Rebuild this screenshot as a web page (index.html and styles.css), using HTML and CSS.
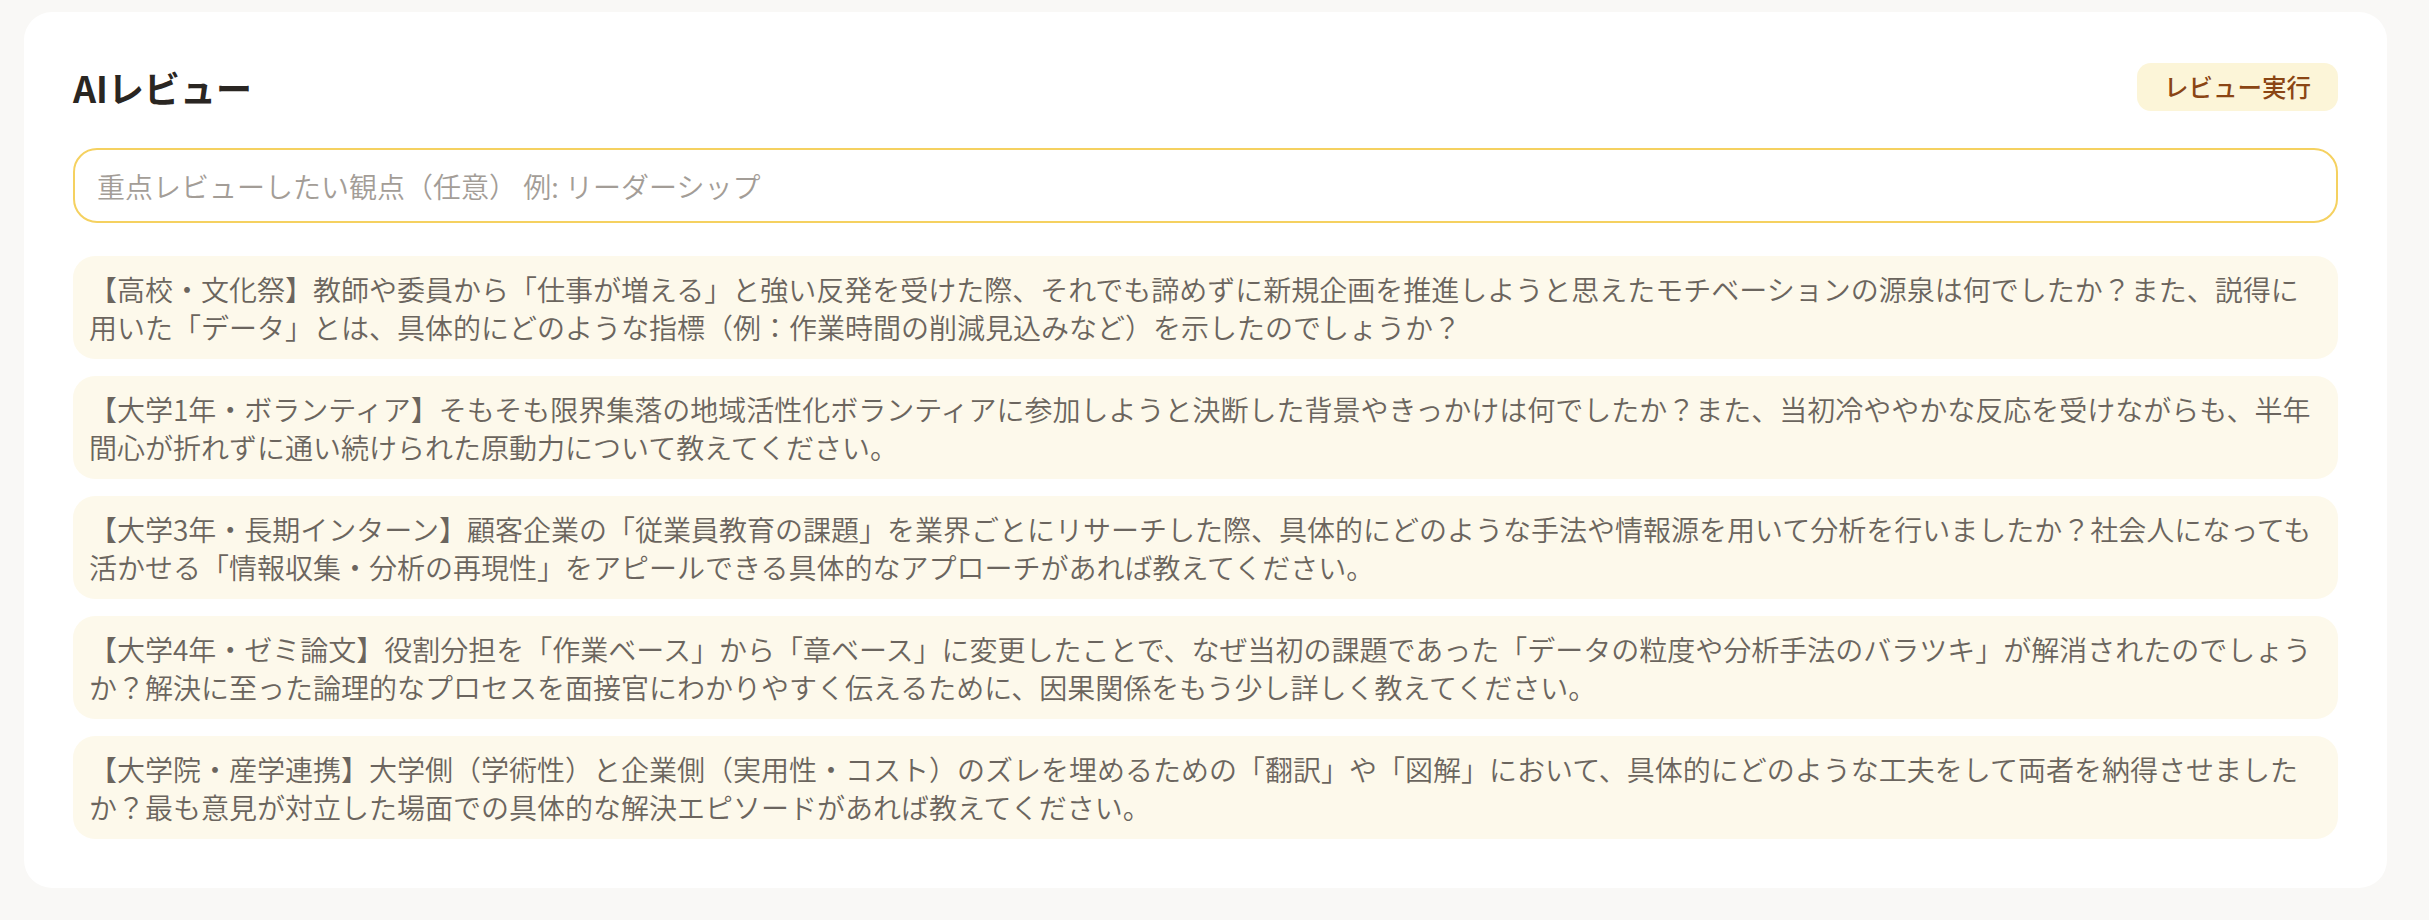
FILE: index.html
```html
<!DOCTYPE html>
<html lang="ja">
<head>
<meta charset="utf-8">
<title>AIレビュー</title>
<link rel="stylesheet" href="styles.css">
</head>
<body>
<section class="card">
  <div class="card-header">
    <h2 class="title">AIレビュー</h2>
    <button class="run-btn" type="button">レビュー実行</button>
  </div>
  <input class="focus-input" type="text" placeholder="重点レビューしたい観点（任意） 例: リーダーシップ">
  <ul class="question-list">
    <li class="question">【高校・文化祭】教師や委員から「仕事が増える」と強い反発を受けた際、それでも諦めずに新規企画を推進しようと思えたモチベーションの源泉は何でしたか？また、説得に用いた「データ」とは、具体的にどのような指標（例：作業時間の削減見込みなど）を示したのでしょうか？</li>
    <li class="question">【大学1年・ボランティア】そもそも限界集落の地域活性化ボランティアに参加しようと決断した背景やきっかけは何でしたか？また、当初冷ややかな反応を受けながらも、半年間心が折れずに通い続けられた原動力について教えてください。</li>
    <li class="question">【大学3年・長期インターン】顧客企業の「従業員教育の課題」を業界ごとにリサーチした際、具体的にどのような手法や情報源を用いて分析を行いましたか？社会人になっても活かせる「情報収集・分析の再現性」をアピールできる具体的なアプローチがあれば教えてください。</li>
    <li class="question">【大学4年・ゼミ論文】役割分担を「作業ベース」から「章ベース」に変更したことで、なぜ当初の課題であった「データの粒度や分析手法のバラツキ」が解消されたのでしょうか？解決に至った論理的なプロセスを面接官にわかりやすく伝えるために、因果関係をもう少し詳しく教えてください。</li>
    <li class="question">【大学院・産学連携】大学側（学術性）と企業側（実用性・コスト）のズレを埋めるための「翻訳」や「図解」において、具体的にどのような工夫をして両者を納得させましたか？最も意見が対立した場面での具体的な解決エピソードがあれば教えてください。</li>
  </ul>
</section>
</body>
</html>
```

FILE: styles.css
```css
* {
  box-sizing: border-box;
}

html, body {
  margin: 0;
  background: #f9f8f6;
}

body {
  padding: 12px 24px;
  font-family: "Noto Sans CJK JP", "Noto Sans", sans-serif;
  text-spacing-trim: space-all;
}

.card {
  width: 2363px;
  background: #ffffff;
  border-radius: 28px;
  padding: 49px;
}

.card-header {
  display: flex;
  align-items: center;
  justify-content: space-between;
  height: 52px;
}

.title {
  margin: 0;
  font-size: 36px;
  line-height: 52px;
  font-weight: 700;
  color: #2a2622;
}

.run-btn {
  font-family: "Noto Sans CJK JP", "Noto Sans", sans-serif;
  font-size: 24.5px;
  line-height: 28px;
  font-weight: 500;
  color: #8a4514;
  background: #fcf5d8;
  border: none;
  border-radius: 14px;
  padding: 10px 27px;
  height: 48px;
  cursor: pointer;
}

.focus-input {
  display: block;
  width: 100%;
  margin-top: 35px;
  height: 75px;
  padding: 0 22px;
  border: 2px solid #f5d160;
  border-radius: 24px;
  background: #ffffff;
  font-family: "Noto Sans CJK JP", "Noto Sans", sans-serif;
  font-size: 28px;
  font-weight: 350;
  color: #3a342e;
  outline: none;
}

.focus-input::placeholder {
  color: #a39d97;
}

.question-list {
  list-style: none;
  margin: 33px 0 0;
  padding: 0;
  display: flex;
  flex-direction: column;
  gap: 17px;
}

.question {
  background: #fdf9eb;
  border-radius: 22px;
  padding: 13.5px 16px;
  font-size: 28px;
  font-weight: 350;
  line-height: 38px;
  color: #6b655e;
}
```
